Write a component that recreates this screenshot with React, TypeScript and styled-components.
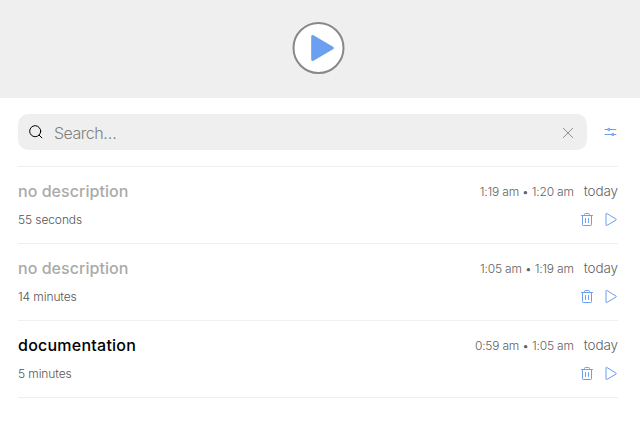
import React from "react";
import styled, { createGlobalStyle } from "styled-components";

const GlobalStyle = createGlobalStyle`
  * { box-sizing: border-box; }
  body { margin: 0; background: #fff; font-family: Inter, "Open Sans", sans-serif; overflow: hidden; }
  button { border: 0; padding: 0; background: none; display: block; }
  svg { display: block; }
`;

const Header = styled.header`
  height: 98px;
  padding-top: 22px;
  background: #efefef;
  display: flex;
  justify-content: center;
  align-items: flex-start;
`;

const StartButton = styled.button`
  width: 52px;
  height: 52px;
  margin-right: 4px;
  svg { overflow: visible; }
`;

const Content = styled.main`
  padding: 16px 22px 0 18px;
`;

const Toolbar = styled.div`
  display: flex;
  align-items: center;
  justify-content: space-between;
  height: 36px;
  margin-bottom: 16px;
`;

const SearchBox = styled.label`
  display: flex;
  align-items: center;
  width: 569px;
  height: 36px;
  padding: 0 11px 0 10px;
  border-radius: 10px;
  background: #efefef;
`;

const SearchInput = styled.input`
  flex: 1;
  min-width: 0;
  height: 36px;
  margin-left: 10px;
  padding: 1px 0 0;
  border: 0;
  outline: 0;
  background: none;
  font: 300 16px/35px Inter, sans-serif;
  letter-spacing: -0.5px;
  &::placeholder { color: #808080; opacity: 1; }
`;

const EntryList = styled.ul`
  list-style: none;
  margin: 0;
  padding: 0;
  border-top: 1px solid #efefef;
`;

const Entry = styled.li`
  height: 77px;
  padding-top: 12px;
  border-bottom: 1px solid #efefef;
`;

const Line = styled.div<{ $height: number }>`
  display: flex;
  justify-content: space-between;
  align-items: center;
  height: ${(p) => p.$height}px;
  white-space: nowrap;
`;

const Title = styled.span<{ $muted: boolean }>`
  color: ${(p) => (p.$muted ? "#aaa" : "#000")};
  font-size: 16px;
  font-weight: 500;
  letter-spacing: ${(p) => (p.$muted ? "0.04px" : "0.24px")};
`;

const Times = styled.div`
  display: flex;
  align-items: baseline;
  gap: 10px;
  color: #626262;
  font-weight: 300;
`;

const Period = styled.span`
  font-size: 12px;
  letter-spacing: -0.2px;
`;

const Day = styled.span`
  font-size: 13.5px;
  letter-spacing: -0.1px;
`;

const Duration = styled.span`
  color: #555;
  font-size: 12px;
  font-weight: 300;
  letter-spacing: -0.1px;
`;

const Actions = styled.div`
  display: flex;
  gap: 8px;
`;

const SearchIcon = () => (
  <svg width="16" height="16" fill="none" stroke="#000" strokeLinecap="round">
    <circle cx="7.2" cy="7.2" r="5.5" />
    <path d="M11.2 11.2 13.9 13.9" />
  </svg>
);

const ClearIcon = () => (
  <svg width="16" height="16" fill="none" stroke="#8c8c8c" strokeLinecap="round">
    <path d="M3.3 4.2 12.7 13.6M12.7 4.2 3.3 13.6" />
  </svg>
);

const FilterIcon = () => (
  <svg width="16" height="16" fill="none" stroke="#6b9fef" strokeLinecap="round">
    <path d="M3 5.5h10.8M3 10.5h10.8" strokeWidth="1.1" />
    <circle cx="6.8" cy="5.5" r="1.2" fill="#a9c8f6" />
    <circle cx="10.8" cy="10.5" r="1.2" fill="#a9c8f6" />
  </svg>
);

const TrashIcon = () => (
  <svg width="16" height="16" fill="none" stroke="#6b9fef" strokeLinecap="round" strokeLinejoin="round">
    <path d="M3.5 4.5h11M4.5 4.5v9.2q0 .8.8.8h7.4q.8 0 .8-.8V4.5M6.5 4.5v-1q0-1 1-1h3q1 0 1 1v1M7.5 7.5v4M10.5 7.5v4" />
  </svg>
);

const PlayIcon = () => (
  <svg width="16" height="16" fill="none" stroke="#6b9fef" strokeLinejoin="round">
    <path d="M4 3v11q0 .9.7.5L14 9.1q.9-.5 0-1L4.7 2.4Q4 2 4 3Z" />
  </svg>
);

const entries = [
  { title: "", period: "1:19 am • 1:20 am", duration: "55 seconds" },
  { title: "", period: "1:05 am • 1:19 am", duration: "14 minutes" },
  { title: "documentation", period: "0:59 am • 1:05 am", duration: "5 minutes" },
];

export default function App() {
  return (
    <>
      <GlobalStyle />
      <Header>
        <StartButton aria-label="Start">
          <svg width="52" height="52">
            <circle cx="26.5" cy="26" r="25" fill="#fff" stroke="#888" strokeWidth="2" />
            <path d="M20.7 14.5v23L40.3 26Z" fill="#6b9fef" stroke="#6b9fef" strokeWidth="3" strokeLinejoin="round" />
          </svg>
        </StartButton>
      </Header>
      <Content>
        <Toolbar>
          <SearchBox>
            <SearchIcon />
            <SearchInput placeholder="Search…" />
            <button aria-label="Clear"><ClearIcon /></button>
          </SearchBox>
          <button aria-label="Filter"><FilterIcon /></button>
        </Toolbar>
        <EntryList>
          {entries.map((entry) => (
            <Entry key={entry.period}>
              <Line $height={24}>
                <Title $muted={!entry.title}>{entry.title || "no description"}</Title>
                <Times>
                  <Period>{entry.period}</Period>
                  <Day>today</Day>
                </Times>
              </Line>
              <Line $height={32}>
                <Duration>{entry.duration}</Duration>
                <Actions>
                  <button aria-label="Delete"><TrashIcon /></button>
                  <button aria-label="Resume"><PlayIcon /></button>
                </Actions>
              </Line>
            </Entry>
          ))}
        </EntryList>
      </Content>
    </>
  );
}
